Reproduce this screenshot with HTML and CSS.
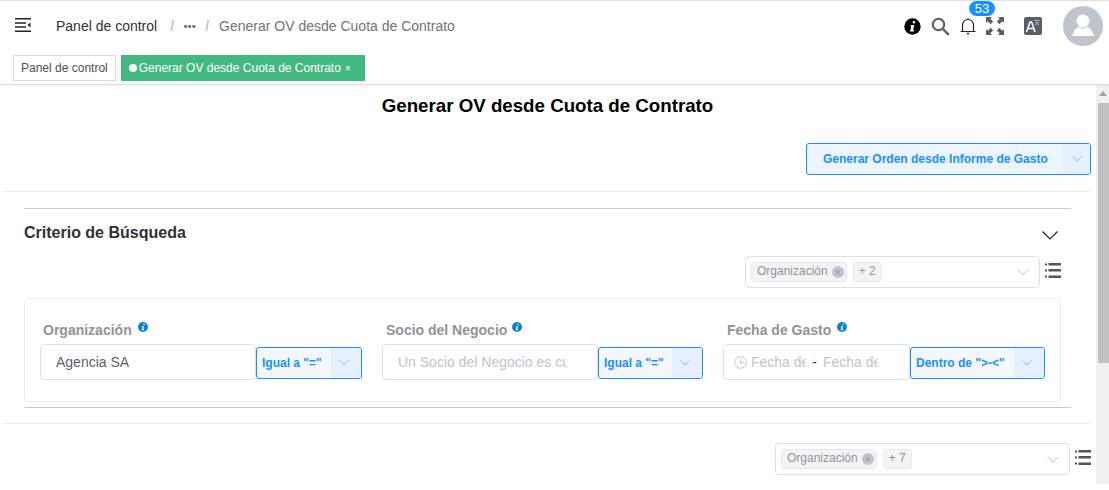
FILE: index.html
```html
<!DOCTYPE html>
<html lang="es">
<head>
<meta charset="utf-8">
<title>Generar OV desde Cuota de Contrato</title>
<link rel="stylesheet" href="styles.css">
</head>
<body>
<div class="app">
  <header class="navbar">
    <svg class="hamburger" width="16" height="14" viewBox="0 0 16 14"><path d="M0 .75h16M0 13.25h16M0 5h11M0 9h11" stroke="#222" stroke-width="1.5" fill="none"/><path d="M15.5 4.500v5L12.500 7z" fill="#222"/></svg>
    <nav class="crumbs">
      <span class="crumb-root">Panel de control</span>
      <span class="sep">/</span>
      <span class="dots">•••</span>
      <span class="sep">/</span>
      <span class="crumb-cur">Generar OV desde Cuota de Contrato</span>
    </nav>
    <div class="nav-icons">
      <svg class="ic-info" width="17" height="17" viewBox="0 0 17 17"><circle cx="8.500" cy="8.500" r="8.200" fill="#000"/><path d="M9.900 3a1.300 1.300 0 1 1 0 2.600a1.300 1.300 0 0 1 0-2.600zM6.800 7h3.500l-1.200 5h1l-.4 1.500H6l1.200-5h-.8z" fill="#fff"/></svg>
      <svg class="ic-search" width="19" height="19" viewBox="0 0 19 19"><circle cx="7.500" cy="7.500" r="5.700" stroke="#606266" stroke-width="2.200" fill="none"/><path d="M11.800 11.800l6 6" stroke="#606266" stroke-width="2.600" fill="none"/></svg>
      <div class="bell-wrap">
        <svg class="ic-bell" width="16" height="17" viewBox="0 0 16 17"><path d="M2.500 13V7a5.500 5.500 0 0 1 11 0v6M.5 13.500h15" stroke="#222" stroke-width="1.200" fill="none"/><path d="M8 1.400V.5M7 15.500h2" stroke="#222" stroke-width="1.400" fill="none"/></svg>
        <span class="badge">53</span>
      </div>
      <svg class="ic-full" width="18" height="18" viewBox="0 0 18 18"><path d="M0 0h6L4.300 1.700 7.200 4.600 4.600 7.200 1.700 4.300 0 6zM18 0v6l-1.700-1.700-2.900 2.900-2.600-2.600 2.900-2.900L12 0zM0 18v-6l1.700 1.700 2.900-2.900 2.600 2.600-2.900 2.900L6 18zM18 18h-6l1.700-1.700-2.900-2.900 2.600-2.600 2.900 2.900L18 12z" fill="#5a5e66"/></svg>
      <svg class="ic-lang" width="18" height="18" viewBox="0 0 18 18"><rect width="18" height="18" rx="2" fill="#5a5e66"/><path d="M2.500 15L6 5h1.600l3.500 10M4 11.500h5" stroke="#fff" stroke-width="1.500" fill="none"/><path d="M10.500 3.500h5M13 3.500v1M11 8l4-3M11 5l4 3" stroke="#c8cad0" stroke-width=".8" fill="none"/></svg>
      <div class="avatar">
        <svg width="40" height="40" viewBox="0 0 40 40"><circle cx="20" cy="20" r="20" fill="#c0c4cc"/><circle cx="20" cy="15" r="6.500" fill="#fff"/><path d="M9 30l3-6.500c1-1.500 3-2.500 4.500-2.500l3.500 2 3.500-2c1.500 0 3.500 1 4.500 2.500L31 30z" fill="#fff"/></svg>
      </div>
    </div>
  </header>

  <div class="tags-bar">
    <span class="tag">Panel de control</span>
    <span class="tag tag-active"><i class="dot"></i>Generar OV desde Cuota de Contrato<span class="tag-x">×</span></span>
  </div>

  <div class="scroller">
    <main class="content">
      <h1 class="title">Generar OV desde Cuota de Contrato</h1>
      <div class="action-row">
        <div class="split-btn">
          <span class="split-label">Generar Orden desde Informe de Gasto</span>
          <span class="split-arrow"><svg class="chev" width="10" height="6" viewBox="0 0 10 6"><path d="M.5.500L5 5l4.500-4.500"/></svg></span>
        </div>
      </div>
      <hr class="rule-light first-rule">
      <section class="search-panel">
        <div class="panel-head">
          <h2 class="panel-title">Criterio de Búsqueda</h2>
          <svg class="chev-dark" width="16" height="9" viewBox="0 0 16 9"><path d="M.5.5L8 8l7.500-7.500"/></svg>
        </div>
        <div class="column-row row-a">
          <div class="multi">
            <span class="chip chip-close">Organización<i class="chip-x">×</i></span>
            <span class="chip">+ 2</span>
            <svg class="chev-grey" width="12" height="7" viewBox="0 0 12 7"><path d="M.5.5L6 6l5.500-5.500"/></svg>
          </div>
          <svg class="list-ic" width="16" height="15" viewBox="0 0 16 15"><path d="M0 .5h2v2H0zM0 6.500h2v2H0zM0 12.500h2v2H0zM3.500 0H16v2.500H3.500zM3.500 6H16v2.500H3.500zM3.500 12.500H16V15H3.500z" fill="#555"/></svg>
        </div>
        <div class="criteria-card">
          <div class="field f1">
            <label class="field-label">Organización<svg class="tip" width="10" height="10" viewBox="0 0 10 10"><circle cx="5" cy="5" r="5" fill="#0a84d0"/><path d="M5.500 1.800h1.200v1.200H5.500zM4 4.200h2l-.7 3.200h.8v.8H3.800l.7-3.200H4z" fill="#fff"/></svg></label>
            <div class="field-controls">
              <div class="input">Agencia SA</div>
              <div class="op"><span class="op-label">Igual a "="</span><span class="op-arrow"><svg class="chev" width="10" height="6" viewBox="0 0 10 6"><path d="M.5.500L5 5l4.500-4.500"/></svg></span></div>
            </div>
          </div>
          <div class="field f2">
            <label class="field-label">Socio del Negocio<svg class="tip" width="10" height="10" viewBox="0 0 10 10"><circle cx="5" cy="5" r="5" fill="#0a84d0"/><path d="M5.500 1.800h1.200v1.200H5.500zM4 4.200h2l-.7 3.200h.8v.8H3.800l.7-3.200H4z" fill="#fff"/></svg></label>
            <div class="field-controls">
              <div class="input placeholder"><span class="clip">Un Socio del Negocio es cualquier</span></div>
              <div class="op op-narrow"><span class="op-label">Igual a "="</span><span class="op-arrow"><svg class="chev" width="10" height="6" viewBox="0 0 10 6"><path d="M.5.500L5 5l4.500-4.500"/></svg></span></div>
            </div>
          </div>
          <div class="field f3">
            <label class="field-label">Fecha de Gasto<svg class="tip" width="10" height="10" viewBox="0 0 10 10"><circle cx="5" cy="5" r="5" fill="#0a84d0"/><path d="M5.500 1.800h1.200v1.200H5.500zM4 4.200h2l-.7 3.200h.8v.8H3.800l.7-3.200H4z" fill="#fff"/></svg></label>
            <div class="field-controls">
              <div class="input date-input">
                <svg class="clock" width="13" height="13" viewBox="0 0 13 13"><circle cx="6.500" cy="6.500" r="5.800" fill="none" stroke="#c0c4cc"/><path d="M6.500 3v3.800h3" fill="none" stroke="#c0c4cc"/></svg>
                <span class="date-part">Fecha de Gasto</span><span class="date-sep">-</span><span class="date-part">Fecha de Gasto</span>
              </div>
              <div class="op op-wide"><span class="op-label">Dentro de "&gt;-&lt;"</span><span class="op-arrow"><svg class="chev" width="10" height="6" viewBox="0 0 10 6"><path d="M.5.500L5 5l4.500-4.500"/></svg></span></div>
            </div>
          </div>
        </div>
      </section>
      <hr class="rule-light second-rule">
      <div class="column-row row-b">
        <div class="multi">
          <span class="chip chip-close">Organización<i class="chip-x">×</i></span>
          <span class="chip">+ 7</span>
          <svg class="chev-grey" width="12" height="7" viewBox="0 0 12 7"><path d="M.5.5L6 6l5.500-5.500"/></svg>
        </div>
        <svg class="list-ic" width="16" height="15" viewBox="0 0 16 15"><path d="M0 .5h2v2H0zM0 6.500h2v2H0zM0 12.500h2v2H0zM3.500 0H16v2.500H3.500zM3.500 6H16v2.500H3.500zM3.500 12.500H16V15H3.500z" fill="#555"/></svg>
      </div>
    </main>
    <div class="scrollbar"><i class="sb-up"></i><i class="sb-thumb"></i></div>
  </div>
</div>
</body>
</html>
```

FILE: styles.css
```css
* { box-sizing: border-box; }
html, body { margin: 0; height: 100%; overflow: hidden; background: #fff; }
body { font-family: "Liberation Sans", Arial, sans-serif; color: #303133; }
.app { height: 490px; display: flex; flex-direction: column; border-top: 1px solid #e4e4e4; }

.navbar { height: 50px; display: flex; align-items: center; padding-left: 15px; background: #fff; box-shadow: 0 1px 4px rgba(0,21,41,.06); position: relative; }
.hamburger { flex: none; margin-top: -2px; }
.crumbs { display: flex; align-items: center; margin-left: 25px; font-size: 14px; }
.crumb-root { color: #303133; margin-right: 13px; }
.sep { color: #c0c4cc; font-weight: 700; }
.dots { color: #606266; font-size: 11.500px; margin: 0 9.500px; line-height: 14px; }
.crumb-cur { color: #737373; margin-left: 10px; }
.nav-icons { margin-left: auto; display: flex; align-items: center; height: 100%; }
.ic-info { margin-right: 10px; }
.ic-search { margin-right: 10px; }
.bell-wrap { position: relative; width: 16px; height: 17px; margin-right: 10px; }
.ic-bell { display: block; }
.badge { position: absolute; left: 9px; top: -17px; width: 26px; height: 15px; border-radius: 8px; background: #1890ff; color: #fff; font-size: 13px; line-height: 15px; text-align: center; }
.ic-full { margin-right: 20px; }
.ic-lang { margin-right: 21px; }
.avatar { width: 40px; height: 40px; margin-right: 6px; }
.avatar svg { display: block; }

.tags-bar { height: 34px; display: flex; align-items: flex-start; gap: 5px; padding: 4px 0 0 13px; background: #fff; border-bottom: 1px solid #d8dce5; box-shadow: 0 1px 3px rgba(0,0,0,.06); position: relative; }
.tag { height: 26px; line-height: 24px; padding: 0 7px; font-size: 12px; border: 1px solid #d8dce5; color: #495060; background: #fff; white-space: nowrap; }
.tag-active { background: #42b983; border-color: #42b983; color: #fff; padding-right: 13px; padding-left: 7px; }
.dot { display: inline-block; width: 8px; height: 8px; border-radius: 50%; background: #fff; margin-right: 2px; vertical-align: 0; }
.tag-x { margin-left: 4px; font-size: 10px; }

.scroller { flex: none; height: 399px; display: flex; overflow: hidden; }
.content { flex: 1; min-width: 0; overflow: hidden; padding: 0 5px 0 4px; }
.title { margin: 10px 0 0; text-align: center; font-size: 18.72px; line-height: 21px; font-weight: 700; color: #000; }
.action-row { display: flex; justify-content: flex-end; margin-top: 27px; }
.split-btn { width: 285px; height: 32px; display: flex; border: 1px solid #1890ff; border-radius: 3px; background: #ecf5ff; color: #1890ff; font-size: 12px; font-weight: 700; overflow: hidden; }
.split-label { flex: 1; line-height: 30px; padding-left: 16px; }
.split-arrow { width: 27px; background: #e6f1fe; display: flex; align-items: center; justify-content: center; }
.chev path, .chev-grey path, .chev-dark path { fill: none; stroke-width: 1; }
.chev path { stroke: #8db8e8; }
.chev-grey path { stroke: #c0c4cc; }
.chev-dark path { stroke: #222; stroke-width: 1.200; }
.rule-light { border: 0; border-top: 1px solid #e6ebf5; margin: 0; }
.first-rule { margin-top: 16px; }
.second-rule { margin-top: 15px; }

.search-panel { margin: 16px 20px 0; border-top: 1px solid #ccc; border-bottom: 1px solid #ccc; }
.panel-head { display: flex; justify-content: space-between; align-items: center; height: 46px; padding: 2px 13px 0 0; }
.panel-title { margin: 0; font-size: 16px; font-weight: 700; color: #303133; }
.chev-dark { margin-top: 4px; }
.column-row { display: flex; justify-content: flex-end; align-items: center; gap: 5px; }
.row-a { margin-top: 1px; padding-right: 10px; }
.row-b { margin-top: 19px; }
.multi { width: 295px; height: 32px; display: flex; align-items: center; gap: 6px; padding: 0 5px; border: 1px solid #dcdfe6; border-radius: 4px; background: #fff; }
.chev-grey { margin-left: auto; margin-right: 5px; }
.chip { height: 20px; display: inline-flex; align-items: center; padding: 0 5px 2px; border: 1px solid #e9e9eb; border-radius: 4px; background: #f4f4f5; color: #909399; font-size: 12px; }
.chip-close { padding-right: 2px; }
.chip-x { width: 12px; height: 12px; margin: 2px 0 0 4px; border-radius: 50%; background: #c0c4cc; color: #909399; font-style: normal; font-size: 11px; line-height: 12px; text-align: center; }
.list-ic { flex: none; margin-top: -4px; }

.criteria-card { margin: 10px 10px 5px 0; height: 104px; padding: 0 0 0 15px; border: 1px solid #e6ebf5; border-radius: 4px; display: flex; }
.field { flex: none; }
.f1 { width: 342px; }
.f2 { width: 341px; }
.field-label { display: block; height: 47px; padding: 23px 0 0 3px; font-size: 14px; font-weight: 700; color: #909399; line-height: 16px; white-space: nowrap; }
.f2 .field-label, .f3 .field-label { padding-left: 4px; }
.tip { margin-left: 6px; vertical-align: 3px; }
.f2 .tip { margin-left: 5px; }
.field-controls { display: flex; align-items: center; margin-top: -2px; }
.input { width: 216px; height: 36px; line-height: 34px; padding: 0 15px; font-size: 14px; color: #606266; border: 1px solid #dcdfe6; border-radius: 4px; background: #fff; overflow: hidden; white-space: nowrap; }
.placeholder { color: #c0c4cc; padding-right: 30px; }
.clip { display: block; overflow: hidden; }
.op { width: 106px; height: 32px; margin-top: 2px; display: flex; border: 1px solid #1890ff; border-radius: 3px; background: #f4f8fe; font-size: 12px; font-weight: 700; color: #1890ff; overflow: hidden; }
.op-narrow { width: 105px; }
.op-wide { width: 135px; }
.op-label { flex: 1; padding-left: 5px; line-height: 30px; white-space: nowrap; }
.op-arrow { width: 30px; padding-right: 4px; background: #e6f0fc; display: flex; align-items: center; justify-content: center; }
.f3 .input { width: 187px; }
.date-input { display: flex; align-items: center; padding: 0 0 0 10px; }
.clock { flex: none; margin-right: 4px; }
.date-part { width: 55px; overflow: hidden; color: #c0c4cc; flex: none; }
.date-sep { width: 17px; flex: none; text-align: center; color: #303133; }

.scrollbar { flex: none; width: 13px; background: #f1f1f1; padding-left: 2px; }
.sb-up { display: block; height: 18px; position: relative; }
.sb-up::after { content: ""; position: absolute; left: 1px; top: 6px; border: 4px solid transparent; border-top: 0; border-bottom: 5px solid #a3a3a3; }
.sb-thumb { display: block; height: 260px; background: #c1c1c1; }
```
